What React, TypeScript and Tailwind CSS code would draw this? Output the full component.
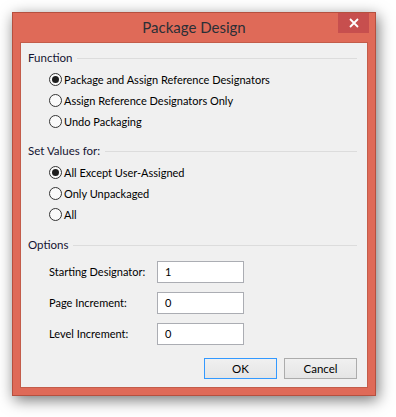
import React from "react"

const font = { fontFamily: 'Lato, "Noto Sans", Arial, sans-serif' }

function GroupHeader({ label }: { label: string }) {
  return (
    <div className="flex items-center h-4 pl-[7px] pr-[10px]">
      <span className="text-[11.5px] leading-4 text-[#141432] whitespace-nowrap">{label}</span>
      <div className="flex-1 h-px bg-[#dcdcdc] ml-[5px]"></div>
    </div>
  )
}

function Radio({ label, checked }: { label: string; checked?: boolean }) {
  return (
    <div className="flex items-center h-[21px] pl-[28px]">
      <span className="shrink-0 w-[13px] h-[13px] rounded-full border border-[#333333] bg-[#fafafa] flex items-center justify-center">
        {checked && <span className="w-[7px] h-[7px] rounded-full bg-[#1e1e1e]"></span>}
      </span>
      <span className="ml-[2px] text-[11px] text-black leading-4 whitespace-nowrap">{label}</span>
    </div>
  )
}

function Field({ label, value }: { label: string; value: string }) {
  return (
    <div className="flex items-center pl-[28px]">
      <span className="w-[108px] shrink-0 text-[11px] text-black whitespace-nowrap">{label}</span>
      <div className="w-[87px] h-[22px] bg-white border border-[#abadb3] flex items-center pl-[7px] text-[11px] text-black">
        {value}
      </div>
    </div>
  )
}

export default function App() {
  return (
    <div className="w-[396px] h-[417px] bg-white pt-[12px] pl-[12px]" style={font}>
      <div className="w-[364px] h-[384px] bg-[#df6a58] border border-[#b5503f] flex flex-col shadow-[2px_4px_14px_rgba(0,0,0,0.55)]">
        <div className="relative h-[29px] flex items-center justify-center">
          <span className="text-[15px] text-[#2a2f36]">Package Design</span>
          <div className="absolute right-[6px] top-0 w-[31px] h-[20px] bg-[#c74f4e] flex items-center justify-center">
            <svg width="10" height="10" viewBox="0 0 10 10">
              <path d="M1 1 L9 9 M9 1 L1 9" stroke="white" strokeWidth="1.8" />
            </svg>
          </div>
        </div>
        <div className="mx-[7px] h-[346px] bg-[#f0f0f0] border border-[#c35c4a] pt-[7px]">
          <GroupHeader label="Function" />
          <div className="mt-[3px]">
            <Radio label="Package and Assign Reference Designators" checked />
            <Radio label="Assign Reference Designators Only" />
            <Radio label="Undo Packaging" />
          </div>
          <div className="mt-[11px]">
            <GroupHeader label="Set Values for:" />
          </div>
          <div className="mt-[3px]">
            <Radio label="All Except User-Assigned" checked />
            <Radio label="Only Unpackaged" />
            <Radio label="All" />
          </div>
          <div className="mt-[12px]">
            <GroupHeader label="Options" />
          </div>
          <div className="mt-[8px] flex flex-col gap-[9px]">
            <Field label="Starting Designator:" value="1" />
            <Field label="Page Increment:" value="0" />
            <Field label="Level Increment:" value="0" />
          </div>
          <div className="mt-[13px] flex justify-end gap-[7px] pr-[10px]">
            <button className="w-[73px] h-[21px] border border-[#3399ff] bg-gradient-to-b from-[#f0f0f0] to-[#e5e5e5] text-[11.5px] text-black">
              OK
            </button>
            <button className="w-[73px] h-[21px] border border-[#acacac] bg-gradient-to-b from-[#f0f0f0] to-[#e5e5e5] text-[11.5px] text-black">
              Cancel
            </button>
          </div>
        </div>
      </div>
    </div>
  )
}
